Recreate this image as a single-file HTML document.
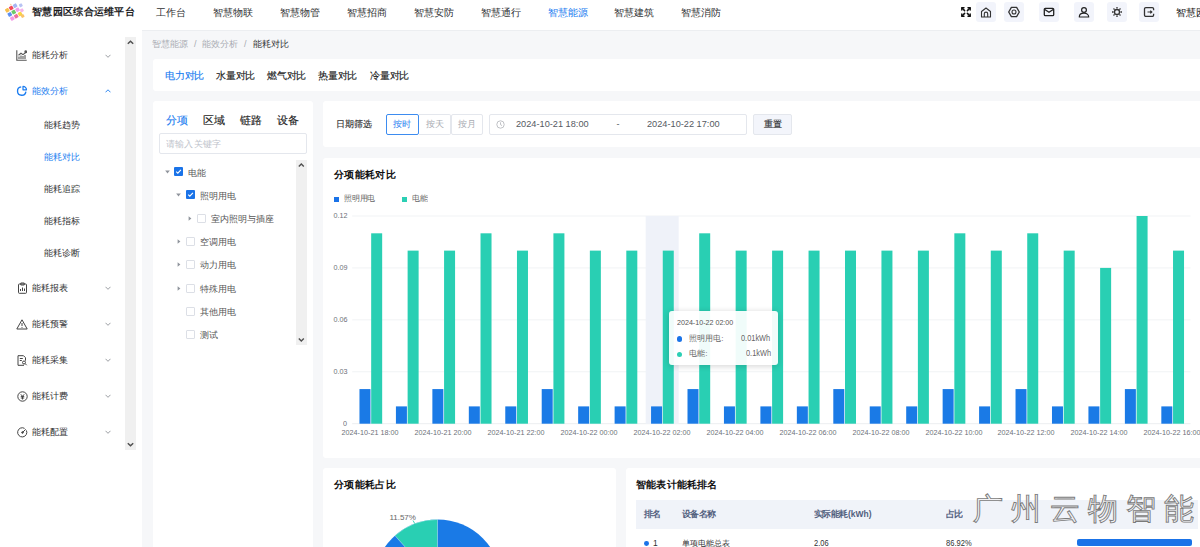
<!DOCTYPE html>
<html><head><meta charset="utf-8"><style>
*{box-sizing:border-box;margin:0;padding:0}
html,body{width:1200px;height:547px;overflow:hidden;background:#f6f7f9;font-family:"Liberation Sans",sans-serif;color:#303133}
.a{position:absolute;white-space:nowrap}
.t{position:absolute;white-space:nowrap;line-height:1}
.h{-webkit-text-stroke:0.15px currentColor}
.card{position:absolute;background:#fff;border-radius:3px}
</style></head><body>
<div class="a" style="left:0;top:0;width:1200px;height:30px;background:#fff"></div>
<div class="a" style="left:142px;top:30px;width:1058px;height:1.2px;background:#eceef1"></div>
<svg class="a" style="left:0;top:0" width="30" height="25" viewBox="0 0 30 25">
<rect x="5.40" y="8.40" width="3.8" height="3.8" rx="0.7" fill="#f7c04f" transform="rotate(-30 7.3 10.3)"/>
<rect x="9.30" y="6.10" width="3.8" height="3.8" rx="0.7" fill="#f44a5a" transform="rotate(-30 11.2 8.0)"/>
<rect x="13.20" y="3.80" width="3.8" height="3.8" rx="0.7" fill="#a6b6f2" transform="rotate(-30 15.1 5.7)"/>
<rect x="7.90" y="12.50" width="3.8" height="3.8" rx="0.7" fill="#5f8ff0" transform="rotate(-30 9.8 14.4)"/>
<rect x="11.80" y="10.20" width="3.8" height="3.8" rx="0.7" fill="#6cc96a" transform="rotate(-30 13.7 12.1)"/>
<rect x="15.70" y="7.90" width="3.8" height="3.8" rx="0.7" fill="#f3a0ea" transform="rotate(-30 17.6 9.8)"/>
<rect x="10.40" y="16.60" width="3.8" height="3.8" rx="0.7" fill="#f59be6" transform="rotate(-30 12.3 18.5)"/>
<rect x="14.30" y="14.30" width="3.8" height="3.8" rx="0.7" fill="#ee6fa0" transform="rotate(-30 16.2 16.2)"/>
<rect x="18.20" y="12.00" width="3.8" height="3.8" rx="0.7" fill="#fad244" transform="rotate(-30 20.1 13.9)"/>
<rect x="19.20" y="3.70" width="3.2" height="3.2" rx="0.7" fill="#b8c3f3" transform="rotate(-30 20.8 5.3)"/>
<rect x="20.30" y="8.70" width="3.2" height="3.2" rx="0.7" fill="#f5b3ea" transform="rotate(-30 21.9 10.3)"/>
<rect x="21.00" y="14.40" width="3.2" height="3.2" rx="0.7" fill="#f9c46a" transform="rotate(-30 22.6 16.0)"/>
<rect x="9.90" y="3.80" width="1.6" height="1.6" rx="0.7" fill="#fbd7a0" transform="rotate(-30 10.7 4.6)"/>
</svg>
<div class="t" style="left:32px;top:6.5px;font-size:11px;color:#1d1d1f;font-weight:bold;transform:scale(0.9364,0.9364);transform-origin:0 0;">智慧园区综合运维平台</div>
<div class="t" style="left:156px;top:7.5px;font-size:10px;color:#303133;font-weight:normal;">工作台</div>
<div class="t" style="left:213px;top:7.5px;font-size:10px;color:#303133;font-weight:normal;">智慧物联</div>
<div class="t" style="left:280px;top:7.5px;font-size:10px;color:#303133;font-weight:normal;">智慧物管</div>
<div class="t" style="left:347px;top:7.5px;font-size:10px;color:#303133;font-weight:normal;">智慧招商</div>
<div class="t" style="left:414px;top:7.5px;font-size:10px;color:#303133;font-weight:normal;">智慧安防</div>
<div class="t" style="left:481px;top:7.5px;font-size:10px;color:#303133;font-weight:normal;">智慧通行</div>
<div class="t" style="left:548px;top:7.5px;font-size:10px;color:#1a7cf0;font-weight:normal;">智慧能源</div>
<div class="t" style="left:614px;top:7.5px;font-size:10px;color:#303133;font-weight:normal;">智慧建筑</div>
<div class="t" style="left:681px;top:7.5px;font-size:10px;color:#303133;font-weight:normal;">智慧消防</div>
<div class="a" style="left:976px;top:2px;width:20px;height:20px;background:#f2f4fb;border-radius:3px"></div>
<div class="a" style="left:1004px;top:2px;width:20px;height:20px;background:#f2f4fb;border-radius:3px"></div>
<div class="a" style="left:1039px;top:2px;width:20px;height:20px;background:#f2f4fb;border-radius:3px"></div>
<div class="a" style="left:1074px;top:2px;width:20px;height:20px;background:#f2f4fb;border-radius:3px"></div>
<div class="a" style="left:1107px;top:2px;width:20px;height:20px;background:#f2f4fb;border-radius:3px"></div>
<div class="a" style="left:1139px;top:2px;width:20px;height:20px;background:#f2f4fb;border-radius:3px"></div>
<svg class="a" style="left:960.8px;top:7.3px" width="10" height="10" viewBox="0 0 10 10" fill="none" stroke="#111" stroke-width="1.5" stroke-linecap="round">
<path d="M1 1l2.6 2.6"/><path d="M9 1L6.4 3.6"/><path d="M1 9l2.6-2.6"/><path d="M9 9L6.4 6.4"/>
<path d="M0.8 3V0.8H3M7 0.8h2.2V3M0.8 7v2.2H3M7 9.2h2.2V7" stroke-width="1.4" stroke-linejoin="round"/></svg>
<svg class="a" style="left:976px;top:2px" width="20" height="20" viewBox="0 0 20 20" fill="none" stroke="#333" stroke-width="1.1">
<path d="M5.5 15V9.5L10 6l4.5 3.5V15z" stroke-linejoin="round"/><path d="M8.3 15v-3.2a1.7 1.7 0 0 1 3.4 0V15"/></svg>
<svg class="a" style="left:1004px;top:2px" width="20" height="20" viewBox="0 0 20 20" fill="none" stroke="#333" stroke-width="1.1">
<path d="M7.4 5.4h5.2L15.3 10l-2.7 4.6H7.4L4.7 10z" stroke-linejoin="round" stroke-width="1.3"/><circle cx="10" cy="10" r="2"/></svg>
<svg class="a" style="left:1039px;top:2px" width="20" height="20" viewBox="0 0 20 20" fill="none" stroke="#222" stroke-width="1.3">
<rect x="5.3" y="6.3" width="9.4" height="7.4" rx="1"/><path d="M5.8 7.5L10 10.3l4.2-2.8"/></svg>
<svg class="a" style="left:1074px;top:2px" width="20" height="20" viewBox="0 0 20 20" fill="none" stroke="#222" stroke-width="1.2">
<circle cx="10" cy="8" r="2.4"/><path d="M5.3 15c0-2.6 2.1-3.8 4.7-3.8s4.7 1.2 4.7 3.8z" stroke-linejoin="round"/></svg>
<svg class="a" style="left:1107px;top:2px" width="20" height="20" viewBox="0 0 20 20" fill="none" stroke="#333" stroke-width="1.2">
<circle cx="10" cy="10" r="2.5" stroke-width="1.3"/><path d="M10 5v1.6M10 13.4V15M5 10h1.6M13.4 10H15M6.5 6.5l1.1 1.1M12.4 12.4l1.1 1.1M6.5 13.5l1.1-1.1M12.4 7.6l1.1-1.1" stroke-width="1.3"/></svg>
<svg class="a" style="left:1139px;top:2px" width="20" height="20" viewBox="0 0 20 20" fill="none" stroke="#333" stroke-width="1.2">
<path d="M14.6 8.3V7a1.3 1.3 0 0 0-1.3-1.3H6.8A1.3 1.3 0 0 0 5.5 7v6a1.3 1.3 0 0 0 1.3 1.3h6.5a1.3 1.3 0 0 0 1.3-1.3v-1.3" stroke-width="1.3"/><path d="M8.5 10h4.3M11.3 8.6l1.5 1.4-1.5 1.4" stroke-width="1.2"/></svg>
<div class="t" style="left:1176px;top:7.5px;font-size:10px;color:#111;font-weight:normal;">智慧园</div>
<div class="a" style="left:0;top:30px;width:142px;height:517px;background:#fff"></div>
<div class="a" style="left:125px;top:37px;width:11px;height:413px;background:#f0f0f0"></div>
<svg class="a" style="left:125px;top:37px" width="11" height="11" viewBox="0 0 11 11"><path d="M2.8 6.8L5.5 4.2l2.7 2.6" fill="none" stroke="#505050" stroke-width="1.5"/></svg>
<svg class="a" style="left:125px;top:439px" width="11" height="11" viewBox="0 0 11 11"><path d="M2.8 4.2L5.5 6.8l2.7-2.6" fill="none" stroke="#505050" stroke-width="1.5"/></svg>
<div class="t" style="left:31.5px;top:51.1px;font-size:9px;color:#303133;font-weight:normal;">能耗分析</div>
<svg class="a" style="left:105px;top:53.5px" width="6" height="4" viewBox="0 0 6 4"><path d="M0.5 0.8L3 3.3l2.5-2.5" fill="none" stroke="#909399" stroke-width="0.9"/></svg>
<svg class="a" style="left:16px;top:49.5px" width="11" height="11" viewBox="0 0 11 11" fill="none" stroke="#555" stroke-width="1.1"><path d="M0.8 0.3v9.9h9.9"/><path d="M3 9V6.5M5 9V5.5M7 9V6M9 9V5"/><path d="M2.5 5.3l2.5-2 2 1.3 3-2.3"/><circle cx="9.8" cy="1.8" r="0.9" fill="#555"/></svg>
<div class="t" style="left:31.5px;top:86.6px;font-size:9px;color:#1a7cf0;font-weight:normal;">能效分析</div>
<svg class="a" style="left:105px;top:89px" width="6" height="4" viewBox="0 0 6 4"><path d="M0.5 3.3L3 0.8l2.5 2.5" fill="none" stroke="#1a7cf0" stroke-width="0.9"/></svg>
<svg class="a" style="left:16px;top:85px" width="12" height="12" viewBox="0 0 12 12" fill="none" stroke="#1a7cf0" stroke-width="1"><path d="M5.2 1.9A4.2 4.2 0 1 0 9.9 6.6" stroke-width="1.35"/><path d="M7 1.3a3.5 3.5 0 0 1 3.5 3.5H7z" stroke-width="1.2" stroke-linejoin="round"/></svg>
<div class="t" style="left:31.5px;top:283.6px;font-size:9px;color:#303133;font-weight:normal;">能耗报表</div>
<svg class="a" style="left:105px;top:286px" width="6" height="4" viewBox="0 0 6 4"><path d="M0.5 0.8L3 3.3l2.5-2.5" fill="none" stroke="#909399" stroke-width="0.9"/></svg>
<svg class="a" style="left:16.5px;top:282px" width="11" height="12" viewBox="0 0 11 12" fill="none" stroke="#444" stroke-width="1"><rect x="1.5" y="2" width="8" height="9.3" rx="0.8"/><path d="M3.8 1h3.4v2H3.8z"/><path d="M3.5 9V7M5.5 9V5.5M7.5 9V6.5"/></svg>
<div class="t" style="left:31.5px;top:319.6px;font-size:9px;color:#303133;font-weight:normal;">能耗预警</div>
<svg class="a" style="left:105px;top:322px" width="6" height="4" viewBox="0 0 6 4"><path d="M0.5 0.8L3 3.3l2.5-2.5" fill="none" stroke="#909399" stroke-width="0.9"/></svg>
<svg class="a" style="left:16px;top:318.5px" width="12" height="11" viewBox="0 0 12 11" fill="none" stroke="#444" stroke-width="1"><path d="M6 0.8L11.2 10H0.8z" stroke-linejoin="round"/><path d="M6 4v3M6 8.2v0.8"/></svg>
<div class="t" style="left:31.5px;top:355.6px;font-size:9px;color:#303133;font-weight:normal;">能耗采集</div>
<svg class="a" style="left:105px;top:358px" width="6" height="4" viewBox="0 0 6 4"><path d="M0.5 0.8L3 3.3l2.5-2.5" fill="none" stroke="#909399" stroke-width="0.9"/></svg>
<svg class="a" style="left:17px;top:354.5px" width="11" height="11" viewBox="0 0 11 11" fill="none" stroke="#444" stroke-width="1"><path d="M7 10.3H1V0.7h5.5L8.5 2.7v3"/><path d="M2.8 3.5h3M2.8 5.5h2"/><circle cx="7" cy="7.5" r="1.5"/><path d="M8.1 8.6l1.6 1.6"/></svg>
<div class="t" style="left:31.5px;top:391.6px;font-size:9px;color:#303133;font-weight:normal;">能耗计费</div>
<svg class="a" style="left:105px;top:394px" width="6" height="4" viewBox="0 0 6 4"><path d="M0.5 0.8L3 3.3l2.5-2.5" fill="none" stroke="#909399" stroke-width="0.9"/></svg>
<svg class="a" style="left:16.5px;top:390.5px" width="11" height="11" viewBox="0 0 11 11" fill="none" stroke="#444" stroke-width="1"><circle cx="5.5" cy="5.5" r="4.7"/><path d="M3.8 3.3l1.7 2 1.7-2M3.8 5.6h3.4M3.8 7h3.4M5.5 5.3v3.2"/></svg>
<div class="t" style="left:31.5px;top:427.6px;font-size:9px;color:#303133;font-weight:normal;">能耗配置</div>
<svg class="a" style="left:105px;top:430px" width="6" height="4" viewBox="0 0 6 4"><path d="M0.5 0.8L3 3.3l2.5-2.5" fill="none" stroke="#909399" stroke-width="0.9"/></svg>
<svg class="a" style="left:16.5px;top:426.5px" width="11" height="11" viewBox="0 0 11 11" fill="none" stroke="#444" stroke-width="1"><path d="M9.4 3.4A4.6 4.6 0 1 1 7.6 1.4"/><path d="M5.5 5.5l3.2-3.2"/><circle cx="5.5" cy="5.5" r="0.8" fill="#444"/></svg>
<div class="t" style="left:44px;top:121.1px;font-size:9px;color:#303133;font-weight:normal;">能耗趋势</div>
<div class="t" style="left:44px;top:153.1px;font-size:9px;color:#1a7cf0;font-weight:normal;">能耗对比</div>
<div class="t" style="left:44px;top:185.1px;font-size:9px;color:#303133;font-weight:normal;">能耗追踪</div>
<div class="t" style="left:44px;top:217.1px;font-size:9px;color:#303133;font-weight:normal;">能耗指标</div>
<div class="t" style="left:44px;top:249.1px;font-size:9px;color:#303133;font-weight:normal;">能耗诊断</div>
<div class="t" style="left:151.7px;top:40.2px;font-size:9px;color:#a8abb2;font-weight:normal;">智慧能源</div>
<div class="t" style="left:194px;top:40.2px;font-size:9px;color:#a8abb2;font-weight:normal;">/</div>
<div class="t" style="left:202px;top:40.2px;font-size:9px;color:#a8abb2;font-weight:normal;">能效分析</div>
<div class="t" style="left:244px;top:40.2px;font-size:9px;color:#a8abb2;font-weight:normal;">/</div>
<div class="t" style="left:252.5px;top:40.2px;font-size:9px;color:#303133;font-weight:normal;">能耗对比</div>
<div class="card" style="left:152.5px;top:58.5px;width:1060px;height:32.3px"></div>
<div class="t h" style="left:164.8px;top:70.5px;font-size:10px;color:#1a7cf0;font-weight:normal;transform:scale(0.9750,0.9750);transform-origin:0 0;">电力对比</div>
<div class="t h" style="left:216.0px;top:70.5px;font-size:10px;color:#222;font-weight:normal;transform:scale(0.9750,0.9750);transform-origin:0 0;">水量对比</div>
<div class="t h" style="left:267.20000000000005px;top:70.5px;font-size:10px;color:#222;font-weight:normal;transform:scale(0.9750,0.9750);transform-origin:0 0;">燃气对比</div>
<div class="t h" style="left:318.40000000000003px;top:70.5px;font-size:10px;color:#222;font-weight:normal;transform:scale(0.9750,0.9750);transform-origin:0 0;">热量对比</div>
<div class="t h" style="left:369.6px;top:70.5px;font-size:10px;color:#222;font-weight:normal;transform:scale(0.9750,0.9750);transform-origin:0 0;">冷量对比</div>
<div class="card" style="left:152.5px;top:101px;width:160.5px;height:460px"></div>
<div class="t h" style="left:165.8px;top:115.3px;font-size:11px;color:#1a7cf0;font-weight:normal;">分项</div>
<div class="t h" style="left:203.3px;top:115.3px;font-size:11px;color:#222;font-weight:normal;">区域</div>
<div class="t h" style="left:240.3px;top:115.3px;font-size:11px;color:#222;font-weight:normal;">链路</div>
<div class="t h" style="left:277.3px;top:115.3px;font-size:11px;color:#222;font-weight:normal;">设备</div>
<div class="a" style="left:159px;top:133px;width:147.5px;height:20.5px;border:1px solid #e4e7ed;border-radius:2px"></div>
<div class="t" style="left:165.8px;top:139.5px;font-size:10px;color:#c0c4cc;font-weight:normal;transform:scale(0.9200,0.9200);transform-origin:0 0;">请输入关键字</div>
<div class="a" style="left:296px;top:160px;width:10.5px;height:185px;background:#f0f0f0"></div>
<svg class="a" style="left:296px;top:160px" width="11" height="10" viewBox="0 0 11 10"><path d="M2.8 6.5L5.3 4l2.5 2.5" fill="none" stroke="#505050" stroke-width="1.4"/></svg>
<svg class="a" style="left:296px;top:335px" width="11" height="10" viewBox="0 0 11 10"><path d="M2.8 3.5L5.3 6l2.5-2.5" fill="none" stroke="#505050" stroke-width="1.4"/></svg>
<svg class="a" style="left:174px;top:167.4px" width="9" height="9" viewBox="0 0 9 9"><rect width="9" height="9" rx="1" fill="#1a73e8"/><path d="M2.2 4.6l1.6 1.5 3.1-3.3" fill="none" stroke="#fff" stroke-width="1.1"/></svg>
<svg class="a" style="left:164.5px;top:169.9px" width="5" height="4" viewBox="0 0 5 4"><path d="M0.2 0.6h4.6L2.5 3.4z" fill="#8f949c"/></svg>
<div class="t" style="left:188px;top:168.6px;font-size:9px;color:#555;font-weight:normal;">电能</div>
<svg class="a" style="left:185.7px;top:190.4px" width="9" height="9" viewBox="0 0 9 9"><rect width="9" height="9" rx="1" fill="#1a73e8"/><path d="M2.2 4.6l1.6 1.5 3.1-3.3" fill="none" stroke="#fff" stroke-width="1.1"/></svg>
<svg class="a" style="left:176.2px;top:192.9px" width="5" height="4" viewBox="0 0 5 4"><path d="M0.2 0.6h4.6L2.5 3.4z" fill="#8f949c"/></svg>
<div class="t" style="left:199.7px;top:191.6px;font-size:9px;color:#555;font-weight:normal;">照明用电</div>
<div class="a" style="left:197.4px;top:213.5px;width:9px;height:9px;border:0.7px solid #dcdfe6;border-radius:1px;background:#fff"></div>
<svg class="a" style="left:188.4px;top:215.5px" width="4" height="5" viewBox="0 0 4 5"><path d="M0.6 0.2v4.6L3.4 2.5z" fill="#8f949c"/></svg>
<div class="t" style="left:211.4px;top:214.7px;font-size:9px;color:#555;font-weight:normal;">室内照明与插座</div>
<div class="a" style="left:185.7px;top:236.9px;width:9px;height:9px;border:0.7px solid #dcdfe6;border-radius:1px;background:#fff"></div>
<svg class="a" style="left:176.7px;top:238.9px" width="4" height="5" viewBox="0 0 4 5"><path d="M0.6 0.2v4.6L3.4 2.5z" fill="#8f949c"/></svg>
<div class="t" style="left:199.7px;top:238.1px;font-size:9px;color:#555;font-weight:normal;">空调用电</div>
<div class="a" style="left:185.7px;top:260.2px;width:9px;height:9px;border:0.7px solid #dcdfe6;border-radius:1px;background:#fff"></div>
<svg class="a" style="left:176.7px;top:262.2px" width="4" height="5" viewBox="0 0 4 5"><path d="M0.6 0.2v4.6L3.4 2.5z" fill="#8f949c"/></svg>
<div class="t" style="left:199.7px;top:261.4px;font-size:9px;color:#555;font-weight:normal;">动力用电</div>
<div class="a" style="left:185.7px;top:283.5px;width:9px;height:9px;border:0.7px solid #dcdfe6;border-radius:1px;background:#fff"></div>
<svg class="a" style="left:176.7px;top:285.5px" width="4" height="5" viewBox="0 0 4 5"><path d="M0.6 0.2v4.6L3.4 2.5z" fill="#8f949c"/></svg>
<div class="t" style="left:199.7px;top:284.7px;font-size:9px;color:#555;font-weight:normal;">特殊用电</div>
<div class="a" style="left:185.7px;top:306.8px;width:9px;height:9px;border:0.7px solid #dcdfe6;border-radius:1px;background:#fff"></div>
<div class="t" style="left:199.7px;top:308.0px;font-size:9px;color:#555;font-weight:normal;">其他用电</div>
<div class="a" style="left:185.7px;top:330px;width:9px;height:9px;border:0.7px solid #dcdfe6;border-radius:1px;background:#fff"></div>
<div class="t" style="left:199.7px;top:331.2px;font-size:9px;color:#555;font-weight:normal;">测试</div>
<div class="card" style="left:323px;top:101.3px;width:900px;height:45.5px"></div>
<div class="t h" style="left:335.5px;top:119.8px;font-size:9px;color:#333;font-weight:normal;">日期筛选</div>
<div class="a" style="left:386.3px;top:113.8px;width:32.4px;height:20.9px;border:1px solid #3d8cf0;border-radius:2px"></div>
<div class="t" style="left:393.3px;top:119.8px;font-size:9px;color:#2a7ff0;font-weight:normal;">按时</div>
<div class="a" style="left:418.5px;top:113.8px;width:32px;height:20.9px;border:1px solid #e4e7ed;border-left:none;border-radius:0 2px 2px 0"></div>
<div class="t" style="left:425.5px;top:119.8px;font-size:9px;color:#a8abb2;font-weight:normal;">按天</div>
<div class="a" style="left:451.2px;top:113.8px;width:31.5px;height:20.9px;border:1px solid #e4e7ed;border-radius:2px"></div>
<div class="t" style="left:458px;top:119.8px;font-size:9px;color:#a8abb2;font-weight:normal;">按月</div>
<div class="a" style="left:489.3px;top:113.9px;width:257.4px;height:20.8px;border:1px solid #e4e7ed;border-radius:2px"></div>
<svg class="a" style="left:496px;top:120px" width="9" height="9" viewBox="0 0 9 9" fill="none" stroke="#b0b3b8" stroke-width="0.8"><circle cx="4.5" cy="4.5" r="3.7"/><path d="M4.5 2.3v2.3l1.5 1"/></svg>
<div class="t" style="left:516px;top:119.8px;font-size:10px;color:#555a62;font-weight:normal;transform:scale(0.9200,0.9200);transform-origin:0 0;">2024-10-21 18:00</div>
<div class="t" style="left:616.5px;top:120px;font-size:9px;color:#555a62;font-weight:normal;">-</div>
<div class="t" style="left:646.8px;top:119.8px;font-size:10px;color:#555a62;font-weight:normal;transform:scale(0.9200,0.9200);transform-origin:0 0;">2024-10-22 17:00</div>
<div class="a" style="left:753.3px;top:114px;width:38.5px;height:20.5px;border:1px solid #e4e7ed;border-radius:2px;background:#f3f5fb"></div>
<div class="t h" style="left:763.5px;top:119.5px;font-size:9px;color:#303133;font-weight:normal;">重置</div>
<div class="card" style="left:323px;top:158px;width:900px;height:300.2px"></div>
<div class="t" style="left:333.5px;top:169.5px;font-size:11px;color:#111;font-weight:bold;transform:scale(0.9364,0.9364);transform-origin:0 0;">分项能耗对比</div>
<div class="a" style="left:333.7px;top:196.5px;width:5.2px;height:5.2px;background:#1a73e8"></div>
<div class="t" style="left:344px;top:194.5px;font-size:8px;color:#666;font-weight:normal;transform:scale(0.9688,0.9688);transform-origin:0 0;">照明用电</div>
<div class="a" style="left:402px;top:196.5px;width:5.2px;height:5.2px;background:#2bcfb4"></div>
<div class="t" style="left:412.2px;top:194.5px;font-size:8px;color:#666;font-weight:normal;transform:scale(0.9688,0.9688);transform-origin:0 0;">电能</div>
<svg class="a" style="left:0;top:0" width="1200" height="547" viewBox="0 0 1200 547"><line x1="352.2" x2="1190.5" y1="216.0" y2="216.0" stroke="#eef0f3" stroke-width="0.8"/><line x1="352.2" x2="1190.5" y1="267.925" y2="267.925" stroke="#eef0f3" stroke-width="0.8"/><line x1="352.2" x2="1190.5" y1="319.85" y2="319.85" stroke="#eef0f3" stroke-width="0.8"/><line x1="352.2" x2="1190.5" y1="371.775" y2="371.775" stroke="#eef0f3" stroke-width="0.8"/><line x1="352.2" x2="1190.5" y1="423.7" y2="423.7" stroke="#e6e8ec" stroke-width="0.8"/><rect x="645.7" y="216.0" width="33" height="207.7" fill="#eff2f9"/><rect x="359.47" y="389.08" width="11.0" height="34.62" fill="#1a7ae6"/><rect x="371.17" y="233.31" width="11.0" height="190.39" fill="#29cfb3"/><rect x="395.92" y="406.39" width="11.0" height="17.31" fill="#1a7ae6"/><rect x="407.62" y="250.62" width="11.0" height="173.08" fill="#29cfb3"/><rect x="432.37" y="389.08" width="11.0" height="34.62" fill="#1a7ae6"/><rect x="444.07" y="250.62" width="11.0" height="173.08" fill="#29cfb3"/><rect x="468.82" y="406.39" width="11.0" height="17.31" fill="#1a7ae6"/><rect x="480.52" y="233.31" width="11.0" height="190.39" fill="#29cfb3"/><rect x="505.27" y="406.39" width="11.0" height="17.31" fill="#1a7ae6"/><rect x="516.97" y="250.62" width="11.0" height="173.08" fill="#29cfb3"/><rect x="541.71" y="389.08" width="11.0" height="34.62" fill="#1a7ae6"/><rect x="553.41" y="233.31" width="11.0" height="190.39" fill="#29cfb3"/><rect x="578.16" y="406.39" width="11.0" height="17.31" fill="#1a7ae6"/><rect x="589.86" y="250.62" width="11.0" height="173.08" fill="#29cfb3"/><rect x="614.61" y="406.39" width="11.0" height="17.31" fill="#1a7ae6"/><rect x="626.31" y="250.62" width="11.0" height="173.08" fill="#29cfb3"/><rect x="651.06" y="406.39" width="11.0" height="17.31" fill="#1a7ae6"/><rect x="662.76" y="250.62" width="11.0" height="173.08" fill="#29cfb3"/><rect x="687.50" y="389.08" width="11.0" height="34.62" fill="#1a7ae6"/><rect x="699.20" y="233.31" width="11.0" height="190.39" fill="#29cfb3"/><rect x="723.95" y="406.39" width="11.0" height="17.31" fill="#1a7ae6"/><rect x="735.65" y="250.62" width="11.0" height="173.08" fill="#29cfb3"/><rect x="760.40" y="406.39" width="11.0" height="17.31" fill="#1a7ae6"/><rect x="772.10" y="250.62" width="11.0" height="173.08" fill="#29cfb3"/><rect x="796.85" y="406.39" width="11.0" height="17.31" fill="#1a7ae6"/><rect x="808.55" y="250.62" width="11.0" height="173.08" fill="#29cfb3"/><rect x="833.30" y="389.08" width="11.0" height="34.62" fill="#1a7ae6"/><rect x="845.00" y="250.62" width="11.0" height="173.08" fill="#29cfb3"/><rect x="869.74" y="406.39" width="11.0" height="17.31" fill="#1a7ae6"/><rect x="881.44" y="250.62" width="11.0" height="173.08" fill="#29cfb3"/><rect x="906.19" y="406.39" width="11.0" height="17.31" fill="#1a7ae6"/><rect x="917.89" y="250.62" width="11.0" height="173.08" fill="#29cfb3"/><rect x="942.64" y="389.08" width="11.0" height="34.62" fill="#1a7ae6"/><rect x="954.34" y="233.31" width="11.0" height="190.39" fill="#29cfb3"/><rect x="979.09" y="406.39" width="11.0" height="17.31" fill="#1a7ae6"/><rect x="990.79" y="250.62" width="11.0" height="173.08" fill="#29cfb3"/><rect x="1015.53" y="389.08" width="11.0" height="34.62" fill="#1a7ae6"/><rect x="1027.23" y="233.31" width="11.0" height="190.39" fill="#29cfb3"/><rect x="1051.98" y="406.39" width="11.0" height="17.31" fill="#1a7ae6"/><rect x="1063.68" y="250.62" width="11.0" height="173.08" fill="#29cfb3"/><rect x="1088.43" y="406.39" width="11.0" height="17.31" fill="#1a7ae6"/><rect x="1100.13" y="267.92" width="11.0" height="155.78" fill="#29cfb3"/><rect x="1124.88" y="389.08" width="11.0" height="34.62" fill="#1a7ae6"/><rect x="1136.58" y="216.00" width="11.0" height="207.70" fill="#29cfb3"/><rect x="1161.33" y="406.39" width="11.0" height="17.31" fill="#1a7ae6"/><rect x="1173.03" y="250.62" width="11.0" height="173.08" fill="#29cfb3"/></svg>
<div class="t" style="right:852.5px;top:212.1px;font-size:9px;color:#6e7079;transform:scale(0.8,0.9);transform-origin:100% 0">0.12</div>
<div class="t" style="right:852.5px;top:264.02500000000003px;font-size:9px;color:#6e7079;transform:scale(0.8,0.9);transform-origin:100% 0">0.09</div>
<div class="t" style="right:852.5px;top:315.95000000000005px;font-size:9px;color:#6e7079;transform:scale(0.8,0.9);transform-origin:100% 0">0.06</div>
<div class="t" style="right:852.5px;top:367.875px;font-size:9px;color:#6e7079;transform:scale(0.8,0.9);transform-origin:100% 0">0.03</div>
<div class="t" style="right:852.5px;top:419.8px;font-size:9px;color:#6e7079;transform:scale(0.8,0.9);transform-origin:100% 0">0</div>
<div class="t" style="left:330.42391304347825px;width:80px;text-align:center;top:428.9px;font-size:9px;color:#6e7079;transform:scale(0.8,0.9);transform-origin:50% 0">2024-10-21 18:00</div>
<div class="t" style="left:403.3195652173913px;width:80px;text-align:center;top:428.9px;font-size:9px;color:#6e7079;transform:scale(0.8,0.9);transform-origin:50% 0">2024-10-21 20:00</div>
<div class="t" style="left:476.21521739130435px;width:80px;text-align:center;top:428.9px;font-size:9px;color:#6e7079;transform:scale(0.8,0.9);transform-origin:50% 0">2024-10-21 22:00</div>
<div class="t" style="left:549.1108695652174px;width:80px;text-align:center;top:428.9px;font-size:9px;color:#6e7079;transform:scale(0.8,0.9);transform-origin:50% 0">2024-10-22 00:00</div>
<div class="t" style="left:622.0065217391304px;width:80px;text-align:center;top:428.9px;font-size:9px;color:#6e7079;transform:scale(0.8,0.9);transform-origin:50% 0">2024-10-22 02:00</div>
<div class="t" style="left:694.9021739130435px;width:80px;text-align:center;top:428.9px;font-size:9px;color:#6e7079;transform:scale(0.8,0.9);transform-origin:50% 0">2024-10-22 04:00</div>
<div class="t" style="left:767.7978260869564px;width:80px;text-align:center;top:428.9px;font-size:9px;color:#6e7079;transform:scale(0.8,0.9);transform-origin:50% 0">2024-10-22 06:00</div>
<div class="t" style="left:840.6934782608696px;width:80px;text-align:center;top:428.9px;font-size:9px;color:#6e7079;transform:scale(0.8,0.9);transform-origin:50% 0">2024-10-22 08:00</div>
<div class="t" style="left:913.5891304347824px;width:80px;text-align:center;top:428.9px;font-size:9px;color:#6e7079;transform:scale(0.8,0.9);transform-origin:50% 0">2024-10-22 10:00</div>
<div class="t" style="left:986.4847826086955px;width:80px;text-align:center;top:428.9px;font-size:9px;color:#6e7079;transform:scale(0.8,0.9);transform-origin:50% 0">2024-10-22 12:00</div>
<div class="t" style="left:1059.3804347826085px;width:80px;text-align:center;top:428.9px;font-size:9px;color:#6e7079;transform:scale(0.8,0.9);transform-origin:50% 0">2024-10-22 14:00</div>
<div class="t" style="left:1132.2760869565216px;width:80px;text-align:center;top:428.9px;font-size:9px;color:#6e7079;transform:scale(0.8,0.9);transform-origin:50% 0">2024-10-22 16:00</div>
<div class="a" style="left:669.2px;top:310.8px;width:109px;height:54px;background:rgba(255,255,255,0.93);border-radius:3px;box-shadow:0 1px 6px rgba(0,0,0,0.18)"></div>
<div class="t" style="left:677px;top:319.2px;font-size:9px;color:#555;font-weight:normal;transform:scale(0.7920,0.9000);transform-origin:0 0;">2024-10-22 02:00</div>
<div class="a" style="left:677px;top:336.3px;width:5.3px;height:5.3px;border-radius:50%;background:#1a73e8"></div>
<div class="t" style="left:689.2px;top:334.8px;font-size:8px;color:#666;font-weight:normal;">照明用电:</div>
<div class="t" style="left:741.2px;top:333.8px;font-size:9px;color:#666;font-weight:normal;transform:scale(0.8218,0.9556);transform-origin:0 0;">0.01kWh</div>
<div class="a" style="left:677px;top:351.5px;width:5.3px;height:5.3px;border-radius:50%;background:#2bcfb4"></div>
<div class="t" style="left:689.2px;top:350px;font-size:8px;color:#666;font-weight:normal;">电能:</div>
<div class="t" style="left:745.5px;top:349.2px;font-size:9px;color:#666;font-weight:normal;transform:scale(0.8218,0.9556);transform-origin:0 0;">0.1kWh</div>
<div class="card" style="left:323px;top:467.7px;width:292.5px;height:100px"></div>
<div class="t" style="left:333.8px;top:479.6px;font-size:11px;color:#111;font-weight:bold;transform:scale(0.9364,0.9364);transform-origin:0 0;">分项能耗占比</div>
<svg class="a" style="left:0;top:0" width="1200" height="547" viewBox="0 0 1200 547">
<circle cx="437.5" cy="583.4" r="64" fill="#1a7ae6"/>
<path d="M437.5 583.4L437.50 519.40A64 64 0 0 0 394.97 535.58Z" fill="#29cfb3" stroke="#fff" stroke-width="0.4"/>
<path d="M413 520.5L414.8 523.6" stroke="#29cfb3" stroke-width="0.9"/>
</svg>
<div class="t" style="left:389.4px;top:514px;font-size:8px;color:#666;font-weight:normal;">11.57%</div>
<div class="card" style="left:625.6px;top:467.6px;width:600px;height:100px"></div>
<div class="t" style="left:636px;top:479.9px;font-size:11px;color:#111;font-weight:bold;transform:scale(0.9273,0.9273);transform-origin:0 0;">智能表计能耗排名</div>
<div class="a" style="left:635.8px;top:500px;width:562px;height:28.7px;background:#f0f3f9"></div>
<div class="t" style="left:644px;top:509.8px;font-size:9px;color:#52607e;font-weight:bold;transform:scale(0.9444,0.9444);transform-origin:0 0;">排名</div>
<div class="t" style="left:682.4px;top:509.8px;font-size:9px;color:#52607e;font-weight:bold;transform:scale(0.9444,0.9444);transform-origin:0 0;">设备名称</div>
<div class="t" style="left:814.2px;top:509.8px;font-size:9px;color:#52607e;font-weight:bold;transform:scale(0.9444,0.9444);transform-origin:0 0;">实际能耗(kWh)</div>
<div class="t" style="left:945.8px;top:509.8px;font-size:9px;color:#52607e;font-weight:bold;transform:scale(0.9444,0.9444);transform-origin:0 0;">占比</div>
<div class="a" style="left:644px;top:540.8px;width:4.8px;height:4.8px;border-radius:50%;background:#1a73e8"></div>
<div class="t" style="left:652.5px;top:538.5px;font-size:9px;color:#303133;font-weight:normal;transform:scale(0.9444,0.9444);transform-origin:0 0;">1</div>
<div class="t" style="left:682.4px;top:539.6px;font-size:8px;color:#303133;font-weight:normal;transform:scale(0.9875,0.9875);transform-origin:0 0;">单项电能总表</div>
<div class="t" style="left:814px;top:539.2px;font-size:9px;color:#303133;font-weight:normal;transform:scale(0.8311,0.9444);transform-origin:0 0;">2.06</div>
<div class="t" style="left:945.8px;top:539.2px;font-size:9px;color:#303133;font-weight:normal;transform:scale(0.8406,0.9444);transform-origin:0 0;">86.92%</div>
<div class="a" style="left:1076.6px;top:539.4px;width:115.4px;height:6.6px;border-radius:2px;background:#1a73e8"></div>
<div class="t" style="left:973px;top:494.3px;font-size:30px;letter-spacing:8.3px;color:#f4f4f6;-webkit-text-stroke:0.9px #7a7a7a">广州云物智能</div>
</body></html>
